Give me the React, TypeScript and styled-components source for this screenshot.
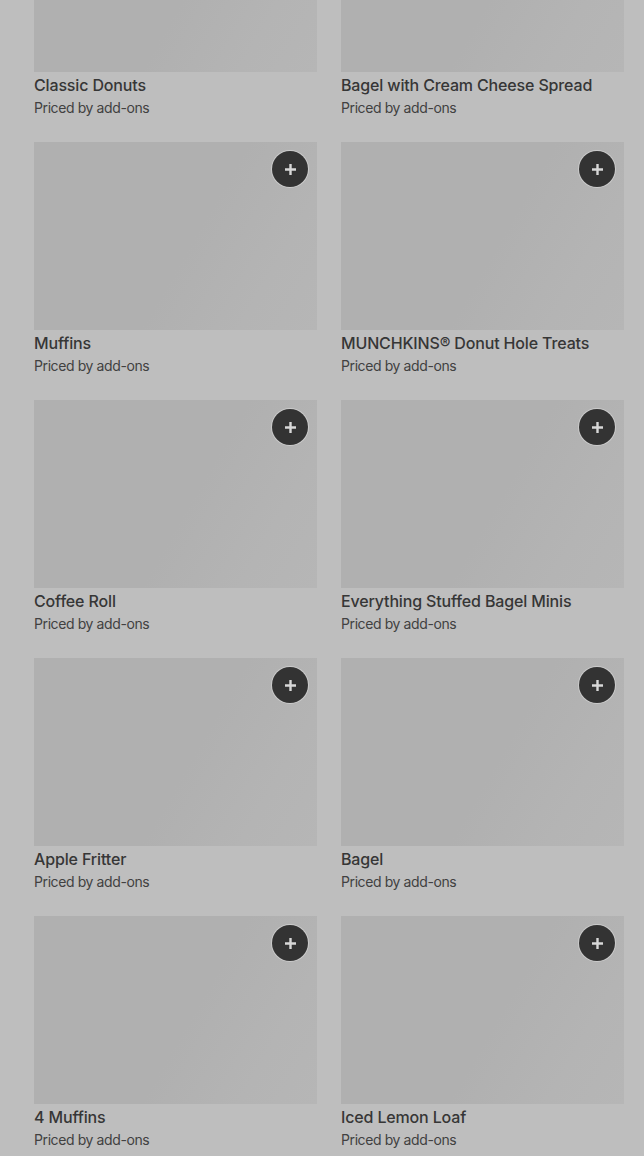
import React from 'react';
import styled, { createGlobalStyle } from 'styled-components';

const GlobalStyle = createGlobalStyle`
  html, body {
    margin: 0;
    padding: 0;
    background: #bebebe;
  }

  body {
    font-family: Inter, 'Noto Sans', 'Liberation Sans', sans-serif;
    -webkit-font-smoothing: antialiased;
  }
`;

const Page = styled.main`
  height: 1156px;
  overflow: hidden;
  background: #bebebe;
`;

const Grid = styled.section`
  margin-top: -116px;
  padding: 0 20px 0 34px;

  display: grid;
  grid-template-columns: 1fr 1fr;
  column-gap: 24px;
  row-gap: 22px;
`;

const Card = styled.article`
  display: flex;
  flex-direction: column;
`;

const Thumb = styled.div`
  position: relative;
  height: 188px;
  background: linear-gradient(
    120deg,
    #b0b0b0 0%,
    #b0b0b0 55%,
    #b4b4b4 80%,
    #b6b6b6 100%
  );
`;

const AddButton = styled.button`
  position: absolute;
  top: 9px;
  right: 9px;
  width: 36px;
  height: 36px;
  padding: 0;

  display: flex;
  align-items: center;
  justify-content: center;

  border: none;
  border-radius: 50%;
  background: #333333;
  box-shadow: 0 0 0 1px rgba(220, 220, 220, 0.6);
  cursor: pointer;
`;

const Title = styled.h3`
  margin: 2px 0 0;
  font-size: 16px;
  line-height: 22px;
  font-weight: 500;
  color: #363636;
  letter-spacing: -0.15px;
`;

const Subtitle = styled.p`
  margin: 0;
  font-size: 14px;
  line-height: 24px;
  font-weight: 400;
  color: #414141;
  letter-spacing: -0.4px;
`;

const PlusIcon = () => (
  <svg width='13' height='13' viewBox='0 0 13 13' fill='none'>
    <path d='M6.5 1v11M1 6.5h11' stroke='#d8d8d8' strokeWidth='2.4' />
  </svg>
);

const items = [
  { name: 'Classic Donuts', button: false },
  { name: 'Bagel with Cream Cheese Spread', button: false },
  { name: 'Muffins', button: true },
  { name: 'MUNCHKINS® Donut Hole Treats', button: true },
  { name: 'Coffee Roll', button: true },
  { name: 'Everything Stuffed Bagel Minis', button: true },
  { name: 'Apple Fritter', button: true },
  { name: 'Bagel', button: true },
  { name: '4 Muffins', button: true },
  { name: 'Iced Lemon Loaf', button: true },
];

const App = () => {
  return (
    <Page>
      <GlobalStyle />
      <Grid>
        {items.map((item) => (
          <Card key={item.name}>
            <Thumb>
              {item.button && (
                <AddButton aria-label={`Add ${item.name}`}>
                  <PlusIcon />
                </AddButton>
              )}
            </Thumb>
            <Title>{item.name}</Title>
            <Subtitle>Priced by add-ons</Subtitle>
          </Card>
        ))}
      </Grid>
    </Page>
  );
};

export default App;
